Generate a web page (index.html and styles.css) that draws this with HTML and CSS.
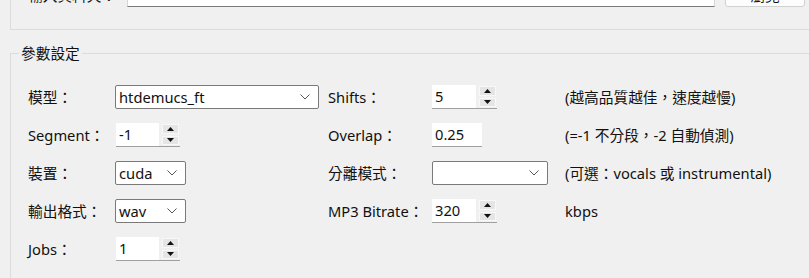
FILE: index.html
```html
<!DOCTYPE html>
<html lang="zh-Hant">
<head>
<meta charset="utf-8">
<link rel="stylesheet" href="styles.css">
</head>
<body>
<div class="window">
  <div class="topgroup">
    <div class="toprow">
      <span class="toplabel">輸入資料夾：</span>
      <div class="topinput"></div>
      <div class="topbtn">瀏覽</div>
    </div>
  </div>

  <fieldset class="group">
    <legend class="legend">參數設定</legend>
    <div class="grid">
      <span class="lbl">模型：</span>
      <div class="cell"><div class="combo w204"><span>htdemucs_ft</span><svg class="chev" width="10" height="6" viewBox="0 0 10 6"><path d="M0.5 0.5 L5 5 L9.5 0.5" fill="none" stroke="#555" stroke-width="1"/></svg></div></div>
      <span class="lbl">Shifts：</span>
      <div class="cell"><div class="spin"><div class="sfield">5</div><div class="sbtns"><div class="sb"><svg width="7" height="4" viewBox="0 0 7 4"><path d="M3.5 0 L7 4 L0 4 Z" fill="#111"/></svg></div><div class="sb"><svg width="7" height="4" viewBox="0 0 7 4"><path d="M0 0 L7 0 L3.5 4 Z" fill="#111"/></svg></div></div></div></div>
      <span class="hint">(越高品質越佳，速度越慢)</span>

      <span class="lbl">Segment：</span>
      <div class="cell"><div class="spin ml1"><div class="sfield">-1</div><div class="sbtns"><div class="sb"><svg width="7" height="4" viewBox="0 0 7 4"><path d="M3.5 0 L7 4 L0 4 Z" fill="#111"/></svg></div><div class="sb"><svg width="7" height="4" viewBox="0 0 7 4"><path d="M0 0 L7 0 L3.5 4 Z" fill="#111"/></svg></div></div></div></div>
      <span class="lbl">Overlap：</span>
      <div class="cell"><div class="entry">0.25</div></div>
      <span class="hint">(=-1 不分段，-2 自動偵測)</span>

      <span class="lbl">裝置：</span>
      <div class="cell"><div class="combo w71"><span>cuda</span><svg class="chev" width="10" height="6" viewBox="0 0 10 6"><path d="M0.5 0.5 L5 5 L9.5 0.5" fill="none" stroke="#555" stroke-width="1"/></svg></div></div>
      <span class="lbl">分離模式：</span>
      <div class="cell"><div class="combo w116"><span></span><svg class="chev" width="10" height="6" viewBox="0 0 10 6"><path d="M0.5 0.5 L5 5 L9.5 0.5" fill="none" stroke="#555" stroke-width="1"/></svg></div></div>
      <span class="hint">(可選：vocals 或 instrumental)</span>

      <span class="lbl">輸出格式：</span>
      <div class="cell"><div class="combo w71"><span>wav</span><svg class="chev" width="10" height="6" viewBox="0 0 10 6"><path d="M0.5 0.5 L5 5 L9.5 0.5" fill="none" stroke="#555" stroke-width="1"/></svg></div></div>
      <span class="lbl">MP3 Bitrate：</span>
      <div class="cell"><div class="spin"><div class="sfield">320</div><div class="sbtns"><div class="sb"><svg width="7" height="4" viewBox="0 0 7 4"><path d="M3.5 0 L7 4 L0 4 Z" fill="#111"/></svg></div><div class="sb"><svg width="7" height="4" viewBox="0 0 7 4"><path d="M0 0 L7 0 L3.5 4 Z" fill="#111"/></svg></div></div></div></div>
      <span class="hint">kbps</span>

      <span class="lbl">Jobs：</span>
      <div class="cell"><div class="spin ml1"><div class="sfield">1</div><div class="sbtns"><div class="sb"><svg width="7" height="4" viewBox="0 0 7 4"><path d="M3.5 0 L7 4 L0 4 Z" fill="#111"/></svg></div><div class="sb"><svg width="7" height="4" viewBox="0 0 7 4"><path d="M0 0 L7 0 L3.5 4 Z" fill="#111"/></svg></div></div></div></div>
      <span></span>
      <span></span>
      <span></span>
    </div>
  </fieldset>
</div>
</body>
</html>
```

FILE: styles.css
```css
* { box-sizing: border-box; }
html, body {
  margin: 0;
  padding: 0;
  background: #f0f0f0;
  overflow: hidden;
}
body {
  font-family: "Noto Sans", "Noto Sans CJK TC", sans-serif;
  font-size: 14.7px;
  color: #111;
}
.window {
  width: 850px;
  height: 278px;
  overflow: hidden;
}
.topgroup {
  margin-left: 10px;
  border: 1px solid #dcdcdc;
  border-top: none;
  padding: 0 0 22px 17px;
}
.toprow {
  display: flex;
  align-items: center;
  height: 24px;
  margin-top: -17px;
}
.toplabel {
  width: 99px;
  line-height: 20px;
}
.topinput {
  width: 588px;
  height: 23px;
  background: #fff;
  border: 1px solid #d6d6d6;
  border-bottom-color: #7a7a7a;
}
.topbtn {
  margin-left: 10px;
  width: 80px;
  height: 24px;
  background: #fdfdfd;
  border: 1px solid #d0d0d0;
  border-radius: 3px;
  display: flex;
  align-items: center;
  justify-content: center;
  line-height: 18px;
}
.group {
  margin: 13px 0 0 10px;
  padding: 0 0 0 8px;
  border: 1px solid #dcdcdc;
  min-width: 0;
  height: 400px;
}
.legend {
  padding: 0 2px;
  line-height: 20px;
}
.grid {
  display: grid;
  grid-template-columns: 87px 213px 104px 133px auto;
  grid-auto-rows: 24px;
  row-gap: 14px;
  align-items: center;
  padding-left: 9px;
  margin-top: 22px;
}
.lbl, .hint {
  line-height: 20px;
  white-space: nowrap;
}
.cell {
  display: flex;
  align-items: center;
  height: 24px;
}
.combo {
  height: 24px;
  background: #fff;
  border: 1px solid #7a7a7a;
  border-radius: 2px;
  display: flex;
  align-items: center;
  justify-content: space-between;
  padding: 0 8px 0 3px;
  line-height: 20px;
}
.w204 { width: 204px; }
.w71 { width: 71px; }
.w116 { width: 116px; }
.chev { flex: none; }
.spin {
  width: 65px;
  height: 24px;
  display: flex;
  background: #f0f0f0;
  border-bottom: 1px solid #a0a0a0;
}
.ml1 { margin-left: 1px; width: 64px; }
.sfield {
  flex: 1;
  background: #fff;
  padding-left: 3px;
  line-height: 22px;
  margin-right: 2px;
}
.sbtns {
  width: 19px;
  display: flex;
  flex-direction: column;
  justify-content: center;
  gap: 2px;
  padding: 1px 1px;
}
.sb {
  height: 10px;
  background: #e5e5e5;
  border: 1px solid #f8f8f8;
  display: flex;
  align-items: center;
  justify-content: center;
}
.entry {
  width: 50px;
  height: 24px;
  background: #fff;
  border-bottom: 1px solid #a0a0a0;
  padding-left: 3px;
  line-height: 22px;
}
```
